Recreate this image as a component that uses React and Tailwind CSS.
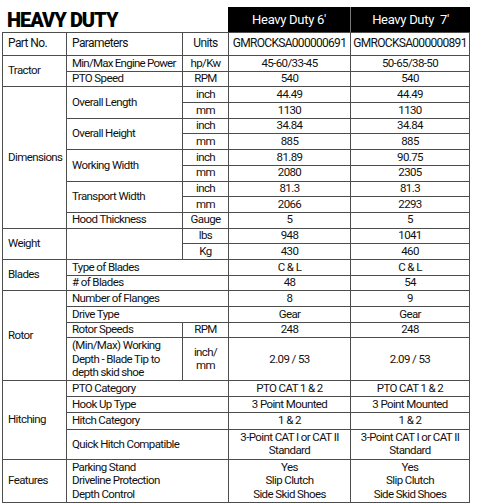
import React from "react";

const Cell = ({ children, className = "" }) => (
  <div className={`bg-white flex items-center px-[5px] leading-[13.5px] whitespace-nowrap ${className}`}>
    {children}
  </div>
);

const C = ({ children, className = "" }) => (
  <Cell className={`justify-center text-center ${className}`}>{children}</Cell>
);

const App = () => {
  return (
    <div className="w-[479px] h-[504px] bg-white overflow-hidden font-[Roboto,sans-serif] text-[#111] text-[11.5px] tracking-[-0.6px]">
      {/* Title + model header */}
      <div className="ml-[2px] mt-[7px] h-[25px] w-[468px] flex">
        <div className="w-[226px] flex items-end pl-[5px] pb-[2px]">
          <h1 className="text-[20px] leading-none font-black tracking-[-1px] text-black">HEAVY DUTY</h1>
        </div>
        <div className="flex bg-black text-white text-[13px] tracking-[-0.3px]">
          <div className="w-[122px] flex items-center justify-center">Heavy Duty 6'</div>
          <div className="w-px bg-[#777]"></div>
          <div className="w-[119px] flex items-center justify-center whitespace-pre">Heavy Duty  7'</div>
        </div>
      </div>

      {/* Spec table */}
      <div className="ml-[2px] w-[468px] grid grid-cols-[63px_115px_45px_121px_118px] grid-rows-[22px_repeat(18,14.7px)_42px_14.5px_15.5px_15.5px_29px_42px] gap-px p-px bg-[#4d4d4d]">
        {/* Header row */}
        <Cell className="bg-[#e6e6e6] text-[12px]">Part No.</Cell>
        <Cell className="bg-[#e6e6e6] text-[12px]">Parameters</Cell>
        <C className="bg-[#e6e6e6] text-[12px]">Units</C>
        <C className="bg-[#e6e6e6] text-[12px] tracking-[-0.7px] px-0">GMROCKSA000000691</C>
        <C className="bg-[#e6e6e6] text-[12px] tracking-[-0.7px] px-0">GMROCKSA000000891</C>

        {/* Tractor */}
        <Cell className="row-span-2">Tractor</Cell>
        <Cell className="pr-0 tracking-[-0.75px]">Min/Max Engine Power</Cell>
        <C>hp/Kw</C>
        <C>45-60/33-45</C>
        <C>50-65/38-50</C>
        <Cell>PTO Speed</Cell>
        <C>RPM</C>
        <C>540</C>
        <C>540</C>

        {/* Dimensions */}
        <Cell className="row-span-9">Dimensions</Cell>
        <Cell className="row-span-2">Overall Length</Cell>
        <C>inch</C>
        <C>44.49</C>
        <C>44.49</C>
        <C>mm</C>
        <C>1130</C>
        <C>1130</C>
        <Cell className="row-span-2">Overall Height</Cell>
        <C>inch</C>
        <C>34.84</C>
        <C>34.84</C>
        <C>mm</C>
        <C>885</C>
        <C>885</C>
        <Cell className="row-span-2">Working Width</Cell>
        <C>inch</C>
        <C>81.89</C>
        <C>90.75</C>
        <C>mm</C>
        <C>2080</C>
        <C>2305</C>
        <Cell className="row-span-2">Transport Width</Cell>
        <C>inch</C>
        <C>81.3</C>
        <C>81.3</C>
        <C>mm</C>
        <C>2066</C>
        <C>2293</C>
        <Cell>Hood Thickness</Cell>
        <C>Gauge</C>
        <C>5</C>
        <C>5</C>

        {/* Weight */}
        <Cell className="row-span-2">Weight</Cell>
        <Cell className="row-span-2"></Cell>
        <C>lbs</C>
        <C>948</C>
        <C>1041</C>
        <C>Kg</C>
        <C>430</C>
        <C>460</C>

        {/* Blades */}
        <Cell className="row-span-2">Blades</Cell>
        <Cell className="col-span-2">Type of Blades</Cell>
        <C>C &amp; L</C>
        <C>C &amp; L</C>
        <Cell className="col-span-2"># of Blades</Cell>
        <C>48</C>
        <C>54</C>

        {/* Rotor */}
        <Cell className="row-span-4">Rotor</Cell>
        <Cell className="col-span-2">Number of Flanges</Cell>
        <C>8</C>
        <C>9</C>
        <Cell className="col-span-2">Drive Type</Cell>
        <C>Gear</C>
        <C>Gear</C>
        <Cell>Rotor Speeds</Cell>
        <C>RPM</C>
        <C>248</C>
        <C>248</C>
        <Cell>
          (Min/Max) Working
          <br />
          Depth - Blade Tip to
          <br />
          depth skid shoe
        </Cell>
        <C>
          inch/
          <br />
          mm
        </C>
        <C>2.09 / 53</C>
        <C>2.09 / 53</C>

        {/* Hitching */}
        <Cell className="row-span-4">Hitching</Cell>
        <Cell className="col-span-2">PTO Category</Cell>
        <C>PTO CAT 1 &amp; 2</C>
        <C>PTO CAT 1 &amp; 2</C>
        <Cell className="col-span-2">Hook Up Type</Cell>
        <C>3 Point Mounted</C>
        <C>3 Point Mounted</C>
        <Cell className="col-span-2">Hitch Category</Cell>
        <C>1 &amp; 2</C>
        <C>1 &amp; 2</C>
        <Cell className="col-span-2">Quick Hitch Compatible</Cell>
        <C>
          3-Point CAT I or CAT II
          <br />
          Standard
        </C>
        <C>
          3-Point CAT I or CAT II
          <br />
          Standard
        </C>

        {/* Features */}
        <Cell>Features</Cell>
        <Cell className="col-span-2">
          Parking Stand
          <br />
          Driveline Protection
          <br />
          Depth Control
        </Cell>
        <C>
          Yes
          <br />
          Slip Clutch
          <br />
          Side Skid Shoes
        </C>
        <C>
          Yes
          <br />
          Slip Clutch
          <br />
          Side Skid Shoes
        </C>
      </div>
    </div>
  );
};

export default App;
